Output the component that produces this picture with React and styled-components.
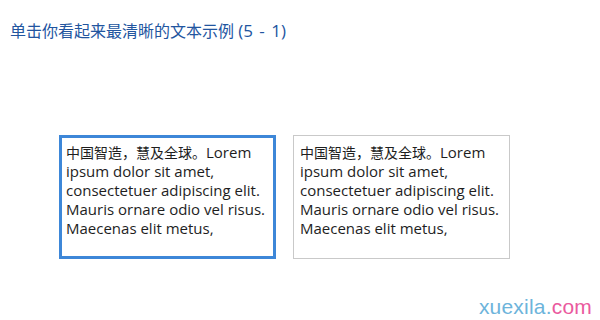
import React from "react";
import styled, { createGlobalStyle } from "styled-components";

const Global = createGlobalStyle`
  html, body { margin: 0; padding: 0; background: #fff; }
  body { width: 600px; height: 320px; overflow: hidden; }
`;

const Page = styled.div`
  position: relative;
  width: 600px;
  height: 320px;
  box-sizing: border-box;
  padding: 21px 0 0 10px;
  font-family: "Open Sans", "Noto Sans CJK SC", sans-serif;
`;

const Title = styled.h1`
  margin: 0;
  font-weight: 400;
  font-size: 16px;
  line-height: 20px;
  color: #22559f;
  font-family: "Open Sans", "Noto Sans CJK SC", sans-serif;
`;

const Num = styled.span`
  font-size: 17px;
  line-height: 20px;
  word-spacing: 2px;
`;

const Row = styled.div`
  display: flex;
  gap: 17px;
  margin: 94px 0 0 49px;
`;

const Sample = styled.div`
  box-sizing: border-box;
  width: 217px;
  height: 124px;
  padding: ${(p) => (p.$selected ? "5px 4px" : "7px 6px")};
  border: ${(p) => (p.$selected ? "3px solid #3d87d8" : "1px solid #c9c9c9")};
  font-size: 15px;
  line-height: 19px;
  color: #1e1e1e;
  font-family: "Open Sans", "Noto Sans CJK SC", sans-serif;
`;

const Cjk = styled.span`
  font-size: 14px;
  line-height: 19px;
`;

const Watermark = styled.div`
  position: absolute;
  right: 8px;
  bottom: 1px;
  font-family: "Liberation Sans", Arial, sans-serif;
  font-size: 21px;
  color: #6db4db;
  letter-spacing: 0.2px;
`;

const Pink = styled.span`
  color: #ea5a9e;
`;

const rest =
  "Lorem ipsum dolor sit amet, consectetuer adipiscing elit. Mauris ornare odio vel risus. Maecenas elit metus,";

function SampleText() {
  return (
    <>
      <Cjk>中国智造，慧及全球。</Cjk>
      {rest}
    </>
  );
}

export default function App() {
  return (
    <>
      <Global />
      <Page>
        <Title>
          单击你看起来最清晰的文本示例 <Num>(5 - 1)</Num>
        </Title>
        <Row>
          <Sample $selected>
            <SampleText />
          </Sample>
          <Sample>
            <SampleText />
          </Sample>
        </Row>
        <Watermark>
          xuexila.<Pink>com</Pink>
        </Watermark>
      </Page>
    </>
  );
}
